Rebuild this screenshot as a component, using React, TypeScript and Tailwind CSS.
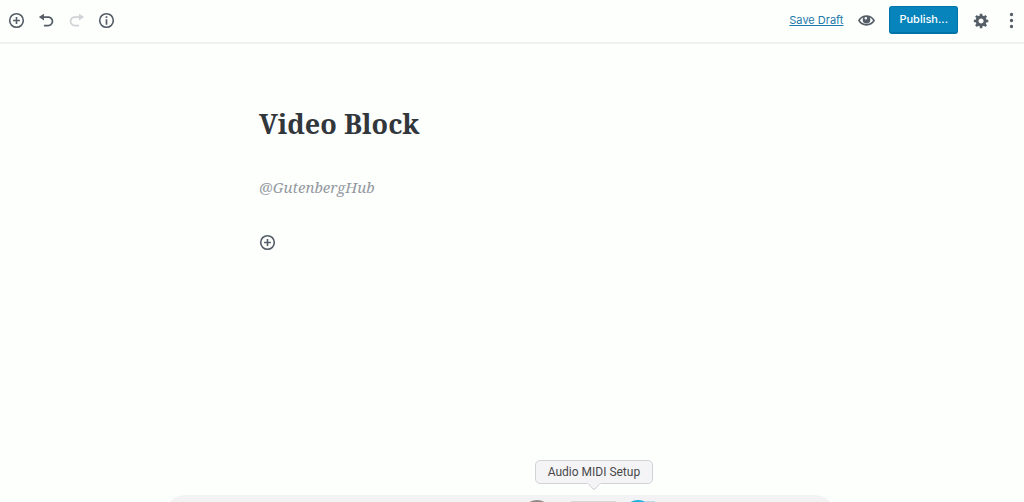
import type { ButtonHTMLAttributes, ReactNode } from "react";
import clsx from "clsx";

type IconButtonProps = ButtonHTMLAttributes<HTMLButtonElement> & {
  label: string;
  /** Width class of the hit area. */
  width?: string;
  children: ReactNode;
};

function IconButton({ label, width = "w-[30px]", children, ...rest }: IconButtonProps) {
  return (
    <button
      type="button"
      aria-label={label}
      className={clsx(
        "flex h-8 items-center justify-center text-[#555d66] disabled:text-[#d0d3d6]",
        width,
      )}
      {...rest}
    >
      {children}
    </button>
  );
}

function Icon({ d }: { d: string }) {
  return (
    <svg
      viewBox="0 0 20 20"
      className="size-[17px]"
      fill="currentColor"
      fillRule="evenodd"
      aria-hidden
    >
      <path d={d} />
    </svg>
  );
}

function InserterIcon() {
  return (
    <svg
      viewBox="0 0 20 20"
      className="size-[17px]"
      fill="none"
      stroke="currentColor"
      strokeWidth="1.9"
      aria-hidden
    >
      <circle cx="10" cy="10" r="8" />
      <path d="M10 6v8M6 10h8" />
    </svg>
  );
}

function InfoIcon() {
  return (
    <svg viewBox="0 0 20 20" className="size-[17px]" fill="none" aria-hidden>
      <circle cx="10" cy="10" r="8" stroke="currentColor" strokeWidth="1.9" />
      <path d="M9 5h2v2H9zM9 8.5h2V15H9z" fill="currentColor" />
    </svg>
  );
}

const UNDO =
  "M12 5H7V2L1 6l6 4V7h5c2.2 0 4 1.8 4 4s-1.8 4-4 4H7v2h5c3.3 0 6-2.7 6-6s-2.7-6-6-6z";
const REDO =
  "M8 5h5V2l6 4-6 4V7H8c-2.2 0-4 1.8-4 4s1.8 4 4 4h5v2H8c-3.3 0-6-2.7-6-6s2.7-6 6-6z";
const EYE =
  "M19.7 9.4C17.7 6 14 3.9 10 3.9S2.3 6 .3 9.4L0 10l.3.6c2 3.4 5.7 5.5 9.7 5.5s7.7-2.1 9.7-5.5l.3-.6-.3-.6zM10 14.1c-3.1 0-6-1.6-7.7-4.1C3.4 8 4.7 7 6.3 6.4c-.5.8-.8 1.6-.8 2.6a4.5 4.5 0 0 0 9 0c0-1-.3-1.8-.8-2.6C15.3 7 16.6 8 17.7 10c-1.7 2.5-4.6 4.1-7.7 4.1zM9.2 5.8a1.5 1.5 0 1 0 0 3 1.5 1.5 0 0 0 0-3z";
const GEAR =
  "M18 12h-2.18c-.17.7-.44 1.35-.81 1.93l1.54 1.54-2.1 2.1-1.54-1.54c-.58.36-1.23.63-1.91.79V19H8v-2.18c-.68-.16-1.33-.43-1.91-.79l-1.54 1.54-2.12-2.12 1.54-1.54c-.36-.58-.63-1.23-.79-1.91H1V9.03h2.17c.16-.7.44-1.35.8-1.94L2.43 5.55l2.1-2.1 1.54 1.54c.58-.37 1.24-.64 1.93-.81V2h3v2.18c.68.16 1.33.43 1.91.79l1.54-1.54 2.12 2.12-1.54 1.54c.36.59.64 1.24.8 1.94H18V12zm-8.5 1.5c1.66 0 3-1.34 3-3s-1.34-3-3-3-3 1.34-3 3 1.34 3 3 3z";
const MORE =
  "M10 1a2 2 0 1 1 0 4 2 2 0 0 1 0-4zM10 8a2 2 0 1 1 0 4 2 2 0 0 1 0-4zM10 15a2 2 0 1 1 0 4 2 2 0 0 1 0-4z";

function EditorHeader() {
  return (
    <header className="flex items-center justify-between border-b-2 border-[#f0f1f1] pt-1 pb-1.5 pl-px">
      <div className="flex items-center">
        <IconButton label="Add block">
          <InserterIcon />
        </IconButton>
        <IconButton label="Undo">
          <Icon d={UNDO} />
        </IconButton>
        <IconButton label="Redo" disabled>
          <Icon d={REDO} />
        </IconButton>
        <IconButton label="Content structure">
          <InfoIcon />
        </IconButton>
      </div>
      <div className="flex items-center">
        <a href="#save" className="mr-1.5 text-[11px] text-[#2279ab] underline">
          Save Draft
        </a>
        <IconButton label="Preview" width="w-[34px]">
          <Icon d={EYE} />
        </IconButton>
        <button
          type="button"
          className="mx-1.5 h-7 rounded-[3px] border border-b-2 border-[#0073a8] bg-[#0784bc] px-[9px] text-[11px] font-medium text-white"
        >
          Publish...
        </button>
        <IconButton label="Settings" width="w-[34px]">
          <Icon d={GEAR} />
        </IconButton>
        <IconButton label="More tools and options" width="w-[26px]">
          <Icon d={MORE} />
        </IconButton>
      </div>
    </header>
  );
}

/** Screen dock peeking in from the bottom edge, with the hovered app's name. */
function Dock() {
  return (
    <div className="fixed inset-x-0 bottom-0 flex justify-center pr-6">
      <div className="relative h-[7px] w-[67%] overflow-hidden">
        <div className="h-5 rounded-t-[20px] bg-[#f3f3f5]" />
        <svg
          viewBox="528 495 128 7"
          className="absolute top-0 right-[179px] h-[7px] w-[128px]"
          aria-hidden
        >
          <ellipse cx="537" cy="506" rx="10" ry="6" fill="#8f8a84" />
          <rect x="571" y="501" width="45" height="1" fill="#d8d8da" />
          <ellipse cx="638" cy="506" rx="10" ry="6" fill="#1fb0e2" />
          <rect x="645" y="501" width="10" height="1" fill="#b9dcea" />
        </svg>
      </div>
      <div
        role="tooltip"
        className="absolute bottom-[18px] left-[58%] w-[118px] -translate-x-1/2 rounded-[5px] border border-[#d2d1d6] bg-[#f4f4f6] text-center font-['Roboto','Liberation_Sans',sans-serif] text-[12px] leading-[22px] text-[#48484b]"
      >
        Audio MIDI Setup
        <svg
          viewBox="0 0 14 8"
          className="absolute top-full left-1/2 h-2 w-3.5 -translate-x-1/2"
          aria-hidden
        >
          <path d="M0 0h14L8 6q-1 1-2 0z" fill="#f4f4f6" />
          <path d="M1 .5L6 6q1 1 2 0L13 .5" fill="none" stroke="#d2d1d6" />
        </svg>
      </div>
    </div>
  );
}

export default function App() {
  return (
    <div className="min-h-screen bg-[#fdfffd] font-['Inter','Liberation_Sans',sans-serif]">
      <EditorHeader />
      <main className="mx-auto w-full max-w-[506px] pt-[62px] font-['Noto_Serif','Droid_Serif','Liberation_Serif',serif]">
        <h1 className="text-[27px] leading-9 font-bold text-[#32373c]">Video Block</h1>
        <p className="mt-[33px] text-[15px] leading-6 text-[#9599a1] italic">@GutenbergHub</p>
        <div className="-ml-[7px] mt-[27px]">
          <IconButton label="Add block">
            <InserterIcon />
          </IconButton>
        </div>
      </main>
      <Dock />
    </div>
  );
}
